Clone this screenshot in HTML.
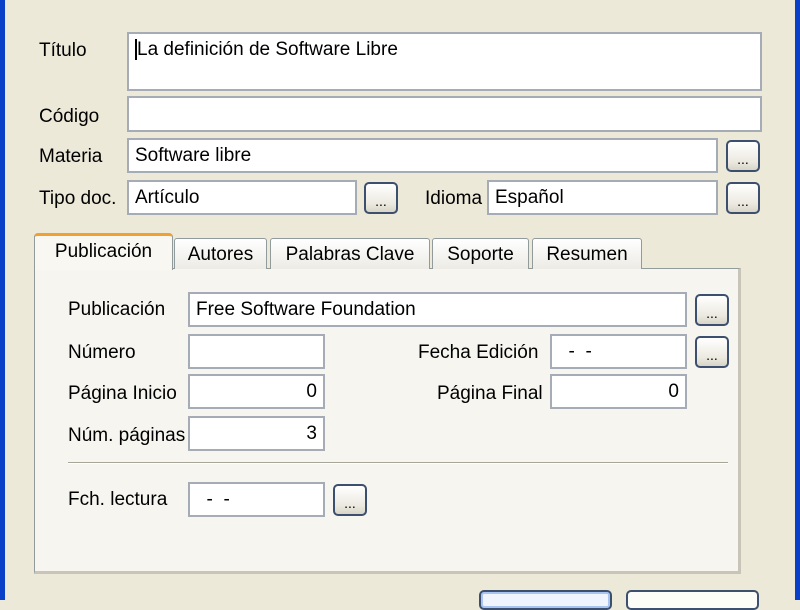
<!DOCTYPE html><html><head><meta charset="utf-8"><style>
body{margin:0;width:800px;height:600px;overflow:hidden;background:#ece9d8;font-family:"Liberation Sans",sans-serif;font-size:19px;color:#000;position:relative}
.a{position:absolute}
.in{position:absolute;background:#fff;border:2px solid #a5acb5;box-sizing:border-box;padding:0 6px;line-height:31px;white-space:nowrap}
.r{text-align:right}
.b{position:absolute;width:34px;height:32px;box-sizing:border-box;border:2px solid #3c4f6e;border-radius:5px;background:linear-gradient(#fff,#ece9e0 70%,#d8d4c8);font-size:14px;text-align:center;line-height:34px}
.tab{position:absolute;top:238px;height:31px;box-sizing:border-box;border:1px solid #919b9c;border-bottom:none;border-radius:3px 3px 0 0;background:linear-gradient(#fff,#ecebe5);text-align:center;line-height:31px}
.lb{position:absolute;line-height:20px;margin-top:2px}
</style></head><body>
<div class="a" style="left:0;top:0;width:5px;height:600px;background:#0a3fc8"></div>
<div class="a" style="left:795px;top:0;width:5px;height:600px;background:#0a3fc8"></div>
<div class="lb" style="left:39px;top:39px">Título</div>
<div class="in" style="left:127px;top:32px;width:635px;height:59px"><span style="border-left:2px solid #000">La definición de Software Libre</span></div>
<div class="lb" style="left:39px;top:105px">Código</div>
<div class="in" style="left:127px;top:96px;width:635px;height:36px"></div>
<div class="lb" style="left:39px;top:145px">Materia</div>
<div class="in" style="left:127px;top:138px;width:591px;height:35px">Software libre</div>
<div class="b" style="left:726px;top:140px">...</div>
<div class="lb" style="left:39px;top:187px">Tipo doc.</div>
<div class="in" style="left:127px;top:180px;width:230px;height:35px">Artículo</div>
<div class="b" style="left:364px;top:182px">...</div>
<div class="lb" style="left:425px;top:187px">Idioma</div>
<div class="in" style="left:487px;top:180px;width:231px;height:35px">Español</div>
<div class="b" style="left:726px;top:182px">...</div>
<div class="a" style="left:34px;top:268px;width:707px;height:306px;box-sizing:border-box;border:1px solid #919b9c;border-right:3px solid #c8c5b8;border-bottom:3px solid #c8c5b8;background:#f6f5f0"></div>
<div class="tab" style="left:174px;width:93px">Autores</div>
<div class="tab" style="left:270px;width:160px">Palabras Clave</div>
<div class="tab" style="left:432px;width:97px">Soporte</div>
<div class="tab" style="left:532px;width:110px">Resumen</div>
<div class="a" style="left:34px;top:233px;width:139px;height:37px;box-sizing:border-box;border:1px solid #919b9c;border-top:3px solid #f0a030;border-bottom:none;border-radius:4px 4px 0 0;background:#f8f7f2;text-align:center;line-height:32px">Publicación</div>
<div class="lb" style="left:68px;top:298px">Publicación</div>
<div class="in" style="left:188px;top:292px;width:499px;height:35px">Free Software Foundation</div>
<div class="b" style="left:695px;top:294px">...</div>
<div class="lb" style="left:68px;top:341px">Número</div>
<div class="in" style="left:188px;top:334px;width:137px;height:35px"></div>
<div class="lb" style="left:418px;top:341px">Fecha Edición</div>
<div class="in" style="left:550px;top:334px;width:137px;height:35px">&nbsp;&nbsp;-&nbsp;&nbsp;-</div>
<div class="b" style="left:695px;top:336px">...</div>
<div class="lb" style="left:68px;top:382px">Página Inicio</div>
<div class="in r" style="left:188px;top:374px;width:137px;height:35px">0</div>
<div class="lb" style="left:437px;top:382px">Página Final</div>
<div class="in r" style="left:550px;top:374px;width:137px;height:35px">0</div>
<div class="lb" style="left:68px;top:424px">Núm. páginas</div>
<div class="in r" style="left:188px;top:416px;width:137px;height:35px">3</div>
<div class="a" style="left:68px;top:462px;width:660px;height:1px;background:#a8a699;border-bottom:1px solid #fff"></div>
<div class="lb" style="left:68px;top:488px">Fch. lectura</div>
<div class="in" style="left:188px;top:482px;width:137px;height:35px">&nbsp;&nbsp;-&nbsp;&nbsp;-</div>
<div class="b" style="left:333px;top:484px">...</div>
<div class="a" style="left:479px;top:590px;width:133px;height:20px;box-sizing:border-box;border:2px solid #3c4f6e;border-radius:5px;background:#f0f4fc;box-shadow:inset 0 0 0 2px #a8c4f0"></div>
<div class="a" style="left:626px;top:590px;width:133px;height:20px;box-sizing:border-box;border:2px solid #3c4f6e;border-radius:5px;background:#fbfbf8"></div>
</body></html>
